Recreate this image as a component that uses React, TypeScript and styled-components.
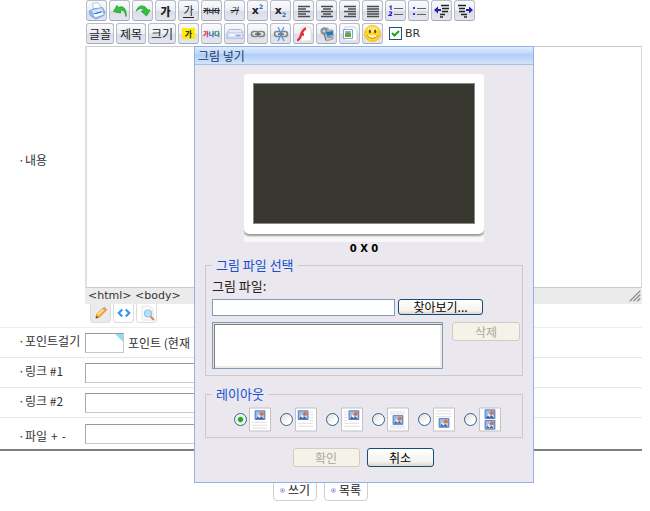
import React, { useState } from "react";
import styled, { createGlobalStyle, css } from "styled-components";

const Global = createGlobalStyle`
  * { box-sizing: border-box; }
  body {
    margin: 0;
    background: #fff;
    color: #333;
    font: 12px/16px "Noto Sans CJK KR", "Noto Sans", sans-serif;
  }
  button, input, select { font: inherit; margin: 0; }
  svg { display: block; }
`;

const Page = styled.main`
  position: relative;
  padding-right: 8px;
`;

const Row = styled.div<{ $height: number; $line?: string; $lineWidth?: number }>`
  display: grid;
  grid-template-columns: 85px minmax(0, 1fr);
  align-items: center;
  min-height: ${(p) => p.$height}px;
  border-bottom: ${(p) => p.$lineWidth ?? 1}px solid ${(p) => p.$line ?? "#e6e6e6"};
`;

const RowLabel = styled.label<{ $place?: "high" | "low" }>`
  display: flex;
  gap: 4px;
  padding: ${(p) => (p.$place === "low" ? "4px 0 0 18px" : p.$place === "high" ? "0 0 8px 18px" : "0 0 4px 18px")};
  white-space: nowrap;
`;

const Bullet = styled.span`
  width: 3px;
`;

const PlainButton = styled.button`
  padding: 0;
  border: 0;
  background: none;
  color: inherit;
`;

const Editor = styled.section`
  align-self: start;
`;

const Toolbars = styled.div`
  display: flex;
  flex-direction: column;
  gap: 2px;
  margin-bottom: 2px;
`;

const Toolbar = styled.div`
  display: flex;
  gap: 2px;
  padding-left: 1px;
`;

const ToolButton = styled.button<{ $width?: number }>`
  display: flex;
  align-items: center;
  justify-content: center;
  flex: none;
  width: ${(p) => p.$width ?? 21}px;
  height: 21px;
  padding: 0;
  border: 1px solid #b9bcc9;
  border-bottom-color: #a5a8b5;
  border-radius: 3px;
  background: linear-gradient(#fafbfd, #eceef5 50%, #d9dce8 51%, #e4e7f0);
  color: #222;
  white-space: nowrap;
`;

const BreakToggle = styled.label`
  display: flex;
  align-items: center;
  gap: 3px;
  padding-left: 4px;
  font: 11px/14px "DejaVu Sans", sans-serif;
`;

const CheckBox = styled.input`
  appearance: none;
  width: 13px;
  height: 13px;
  border: 1px solid #1d5281;
  background: #fff;
  &:checked {
    background: #fff url("data:image/svg+xml,%3Csvg xmlns='http://www.w3.org/2000/svg' viewBox='0 0 11 11'%3E%3Cpath d='M2 5l2.5 2.5L9 3' fill='none' stroke='%2321a121' stroke-width='2'/%3E%3C/svg%3E");
  }
`;

const Canvas = styled.div`
  height: 242px;
  border: 1px solid #ccc;
  border-left: 2px solid #e0e0e0;
  border-right-color: #d8d8d8;
  background: #fff;
`;

const StatusBar = styled.div`
  display: flex;
  align-items: center;
  justify-content: space-between;
  height: 16px;
  padding: 0 1px 0 3px;
  background: #ebebeb;
  font: 11px/16px "DejaVu Sans", sans-serif;
`;

const ModeTabs = styled.div`
  display: flex;
  gap: 2px;
  padding-left: 5px;
  margin-bottom: 3px;
`;

const ModeTab = styled.button<{ $active?: boolean }>`
  display: grid;
  place-items: center;
  width: 21px;
  height: 19px;
  padding: 0;
  border: 1px solid #ddd;
  border-top: 0;
  border-radius: 0 0 4px 4px;
  background: ${(p) => (p.$active ? "#ebebeb" : "#fff")};
`;

const Field = styled.div`
  display: flex;
  align-items: center;
  gap: 4px;
  white-space: nowrap;
`;

const FormInput = styled.input<{ $small?: boolean }>`
  width: ${(p) => (p.$small ? "39px" : "60%")};
  height: 20px;
  padding: 0 3px;
  border: 1px solid #c8c8c8;
  border-top-color: #999;
  border-left-color: #aaa;
  background: ${(p) => (p.$small ? "linear-gradient(225deg, #8fdcf8 5px, #fff 6px)" : "#fff")};
`;

const PageActions = styled.div`
  display: flex;
  gap: 7px;
  padding: 28px 0 10px 273px;
`;

const PageButton = styled.button`
  display: flex;
  align-items: center;
  gap: 3px;
  width: 44px;
  height: 22px;
  padding: 0 6px;
  border: 1px solid #d0d0d0;
  border-radius: 4px;
  background: #fff;
  color: #222;
  white-space: nowrap;
`;

const Dialog = styled.section`
  position: absolute;
  top: 46px;
  left: 194px;
  width: 340px;
  border: 1px solid #91b2e5;
  background: #eae8ee;
  color: #222;
`;

const TitleBar = styled.h1`
  height: 18px;
  margin: 0;
  padding-left: 3px;
  border-bottom: 1px solid #a6c2e8;
  background: linear-gradient(#e0edfc, #c4dafa 35%, #afcef6 45%, #d2e4fb);
  color: #203a66;
  font-size: 12px;
  font-weight: 400;
  line-height: 17px;
`;

const Preview = styled.div`
  width: 240px;
  height: 160px;
  margin: 9px auto 0;
  padding: 9px 9px 10px;
  border-radius: 3px 3px 5px 5px;
  background: #fff;
  box-shadow: 0 2px 2px #999;
  clip-path: inset(0 0 -4px 0);
`;

const PreviewImage = styled.div`
  height: 141px;
  border: 1px solid #8a8c84;
  background: #373730;
`;

const PreviewFoot = styled.div`
  width: 240px;
  height: 7px;
  margin: 1px auto 0;
  background: #f7f7f8;
`;

const Dimensions = styled.output`
  display: block;
  color: #000;
  font: bold 10px/14px "DejaVu Sans", sans-serif;
  text-align: center;
`;

const Group = styled.fieldset`
  min-width: 0;
  margin: 0 10px;
  padding: 0 0 0 6px;
  border: 1px solid #cbc9d0;
`;

const FileGroup = styled(Group)`
  height: 120px;
  margin-bottom: 9px;
`;

const LayoutGroup = styled(Group)`
  height: 53px;
`;

const Legend = styled.legend`
  padding: 0 4px;
  color: #174fd0;
  font-size: 13px;
  line-height: 18px;
`;

const FileLabel = styled.label`
  display: block;
  margin: 3px 0 4px;
  font-size: 13px;
  line-height: 18px;
`;

const FileRow = styled.div`
  display: flex;
  align-items: start;
  gap: 3px;
  margin-bottom: 6px;
`;

const ListRow = styled(FileRow)`
  gap: 9px;
`;

const FileInput = styled.input`
  width: 183px;
  height: 17px;
  padding: 0 3px;
  border: 1px solid #7f9db9;
  background: #fff;
`;

const FileList = styled.select`
  width: 231px;
  height: 47px;
  padding: 0;
  border: 1px solid #7f9db9;
  border-radius: 0;
  background: #fff;
  box-shadow: inset 1px 1px #e6e4da, inset 2px 2px #817f76, inset -2px -2px #efede3;
  overflow: hidden;
`;

const XpButton = styled.button<{ $width: number; $short?: boolean }>`
  display: grid;
  place-items: center;
  width: ${(p) => p.$width}px;
  height: ${(p) => (p.$short ? 16 : 19)}px;
  padding: 0;
  border: 1px solid #164c79;
  border-radius: 3px;
  background: linear-gradient(#fff, #f4f3ee 75%, #d9d5c9);
  color: #000;
  line-height: 14px;
  &:disabled {
    border-color: #cfcdbd;
    background: #f3f3ea;
    color: #aaa99a;
  }
`;

const LayoutOptions = styled.div`
  display: flex;
  gap: 9px;
  padding: 4px 0 0 22px;
`;

const LayoutOption = styled.label`
  display: flex;
  align-items: center;
  gap: 2px;
  width: 37px;
`;

const Radio = styled.input`
  appearance: none;
  flex: none;
  width: 13px;
  height: 13px;
  border: 1px solid #31628f;
  border-radius: 50%;
  background: linear-gradient(135deg, #dcdcd4, #fff 70%);
  &:checked {
    background: radial-gradient(circle, #27a527 0 2px, #c8ecc5 3px, #f5f6f1 4px);
  }
`;

const DialogActions = styled.div`
  display: flex;
  justify-content: center;
  gap: 7px;
  padding: 10px 2px 15px 0;
`;

const Icon = ({ children, size = 16 }: { children: React.ReactNode; size?: number }) => (
  <svg width={size} height={size} viewBox="0 0 16 16" fill="none" aria-hidden="true">
    {children}
  </svg>
);

const PrintIcon = () => (
  <Icon size={18}>
    <path d="M4 1l5-.5 3 5-7 2z" fill="#fff" stroke="#a9c1e6" strokeWidth=".8" />
    <path d="M1 8l4-2 8-1 2 4-1 3-7 3-5-3z" fill="#8fbcf2" stroke="#7c9fd6" strokeWidth=".8" />
    <path d="M3 7.500l9-2 1.500 2.500-8 2z" fill="#d6e8fd" />
    <path d="M4 11l9-2.500 1.500 2.500-8 3z" fill="#fff" stroke="#83a8db" strokeWidth=".6" />
    <path d="M6 10.500l6-1.700" stroke="#2f74d8" />
  </Icon>
);

const CurveArrow = ({ redo = false }: { redo?: boolean }) => (
  <Icon>
    <path
      d={
        redo
          ? "M1.500 8C2 3 9 0 12.500 7H15l-3.500 6L6 8h3C8 5 5 4.500 1.500 8z"
          : "M14 13.500C15 5 10 2.500 7 4.500L5 2.500 1.500 8.500 8.500 10V7.500c3-1 5 2 5.500 6z"
      }
      fill="#35c335"
      stroke="#1c9a2e"
      strokeWidth=".8"
    />
  </Icon>
);

const AlignIcon = ({ kind }: { kind: "left" | "center" | "right" | "full" }) => {
  const start = kind === "right" ? 6 : kind === "center" ? 4 : 2;
  const end = kind === "left" ? 10 : kind === "center" ? 12 : 14;
  return (
    <Icon>
      <path d="M2 3.500h12M2 8.500h12M2 13.500h12" stroke="#4a4b50" strokeWidth="1.5" />
      <path
        d={kind === "full" ? "M2 6h12M2 11h12" : `M${start} 6h${end - start}M${start} 11h${end - start}`}
        stroke="#4a4b50"
        strokeWidth="1.5"
      />
    </Icon>
  );
};

const ListIcon = ({ ordered = false }: { ordered?: boolean }) => (
  <Icon>
    <path d="M6 5.500h9M6 11.500h9" stroke="#666" />
    {ordered ? (
      <path d="M1.500 4l1.500-1v4M1 9h2.500v1.500L1 12.500h3" stroke="#2926bc" strokeWidth="1.2" />
    ) : (
      <path d="M2 4h2v2H2zM2 10h2v2H2z" fill="#3938c5" />
    )}
  </Icon>
);

const IndentIcon = ({ outdent = false }: { outdent?: boolean }) => (
  <Icon>
    {outdent ? (
      <>
        <path d="M7 2.500h8M8 5.500h7M8 8.500h6M6 11.500h5M6 14h3" stroke="#222" strokeWidth="1.7" />
        <path d="M0 7l4-3.500V6h3v2H4v2.500z" fill="#211db3" />
      </>
    ) : (
      <>
        <path d="M1 2.500h8M2 5.500h6M2 8.500h6M4 11.500h6M7 14h3" stroke="#222" strokeWidth="1.7" />
        <path d="M16 7l-4-3.500V6H9v2h3v2.500z" fill="#211db3" />
      </>
    )}
  </Icon>
);

const SubtitleIcon = () => (
  <Icon size={18}>
    <path d="M3 4h10l2 2v6H1V7z" fill="#e6ebfa" stroke="#a3b1d8" strokeWidth=".8" />
    <path d="M1 7h12l2-1" stroke="#b9c5e4" strokeWidth=".8" />
    <path d="M2 8h11v4H2z" fill="#cfd9f1" />
    <path d="M9 9.500h4" stroke="#8499cf" />
    <path d="M3 9h5" stroke="#fff" strokeWidth="1.5" />
  </Icon>
);

const LinkIcon = ({ broken = false }: { broken?: boolean }) => (
  <Icon>
    <rect x="1.500" y="5.500" width="7" height="5" rx="2.500" stroke="#85857f" strokeWidth="1.6" />
    <rect x="7.500" y="5.500" width="7" height="5" rx="2.500" stroke="#85857f" strokeWidth="1.6" />
    <path d="M5 8h6" stroke="#55554f" strokeWidth="1.3" />
    {broken && <path d="M5 1l2 4M11 1L9 5M5 15l2-4M11 15l-2-4M8 5v6" stroke="#4d9bf0" strokeWidth="1.3" />}
  </Icon>
);

const FlashIcon = () => (
  <Icon>
    <path d="M5 1h8l2 3v11H5z" fill="#fff" stroke="#dcdfe6" />
    <path d="M1 14c5 0 3-10 9-11.500M4 8.500h4" stroke="#e8303c" strokeWidth="2.4" />
  </Icon>
);

const MovieIcon = () => (
  <Icon>
    <path d="M4 2h5v2h5v9l-7 2z" fill="#c5cbd2" stroke="#8a929c" strokeWidth=".8" />
    <circle cx="5" cy="5" r="3.500" fill="#858e98" />
    <circle cx="5" cy="5" r="1.500" fill="#c9d0d6" />
    <path d="M7 6l7-1v4l-6 1z" fill="#287bb2" />
    <path d="M5 8l2 6m1-3h5" stroke="#5e6a78" />
  </Icon>
);

const ImageFileIcon = () => (
  <Icon>
    <path d="M3 1h9l3 3v11H3z" fill="#fff" stroke="#cdd4dd" />
    <path d="M1.500 3.500h9v9h-9z" fill="#fff" stroke="#87a4cb" />
    <path d="M3 5h6v6H3z" fill="#8fb0cf" />
    <path d="M3 11V8l3-2 3 2v3z" fill="#69a53f" />
  </Icon>
);

const SmileIcon = () => (
  <Icon size={17}>
    <circle cx="8" cy="8" r="7.500" fill="#ffd625" stroke="#eebb12" strokeWidth=".8" />
    <ellipse cx="8" cy="4" rx="5" ry="2.500" fill="#ffe978" />
    <ellipse cx="5.500" cy="6" rx="1" ry="1.800" fill="#6b4a0c" />
    <ellipse cx="10.500" cy="6" rx="1" ry="1.800" fill="#6b4a0c" />
    <path d="M3 9.500c2 4 8 4 10 0" fill="#fff3ae" stroke="#b57d0c" strokeWidth=".8" />
  </Icon>
);

const PencilIcon = () => (
  <Icon size={14}>
    <path d="M2 14l1-5 8-7 3 3-8 8z" fill="#f6ac32" stroke="#d98f34" strokeWidth=".8" />
    <path d="M4 10l7-6" stroke="#ffe197" strokeWidth="2" />
    <path d="M10 3l2-2 3 3-2 2z" fill="#e99474" />
    <path d="M2 14l1-3 2 2z" fill="#574437" />
  </Icon>
);

const CodeIcon = () => (
  <Icon size={14}>
    <path d="M6 4L2 8l4 4M10 4l4 4-4 4" stroke="#3298f3" strokeWidth="2.4" />
  </Icon>
);

const SearchPageIcon = () => (
  <Icon>
    <path d="M3 1h7l4 3v11H3z" fill="#fafafa" stroke="#e4e4e4" />
    <circle cx="9" cy="8.500" r="3.500" fill="#b9e0fa" stroke="#8cc3ec" strokeWidth="1.2" />
    <path d="M11.500 11.500l3.500 3.500" stroke="#cd8d52" strokeWidth="2" />
  </Icon>
);

const GripIcon = () => (
  <Icon size={12}>
    <path d="M1 15L15 1M6 15l9-9M11 15l4-4" stroke="#888" strokeWidth="1.5" />
  </Icon>
);

const TargetIcon = () => (
  <svg width="7" height="7" viewBox="0 0 7 7" fill="none" aria-hidden="true">
    <circle cx="3.500" cy="3.500" r="3" stroke="#9e91e9" />
    <circle cx="3.500" cy="3.500" r="1.300" fill="#6e5bdc" />
  </svg>
);

const Picture = ({ x, y }: { x: number; y: number }) => (
  <g transform={`translate(${x} ${y})`}>
    <path d="M0 0h11v10H0z" fill="#9dbce8" />
    <path d="M.5 .5h10v9H.5z" stroke="#5d7fb8" />
    <path d="M1 9l3-5 2 3 2-2 2 4z" fill="#f2f5fb" />
    <path d="M1 9l2-3 2 2 2-2 3 3z" fill="#48659d" />
    <path d="M5 4l2-2.500 2.500 1L9 5 7 5.500z" fill="#e56a2c" />
  </g>
);

const layouts = [
  { name: "가운데", pictures: [[6, 3]], lines: "M3 15.500h16M3 18.500h16M3 21.500h16" },
  { name: "왼쪽", pictures: [[3, 3]], lines: "M15 4.500h4M15 7.500h4M15 10.500h4M15 13.500h4M3 16.500h16M3 19.500h16" },
  { name: "오른쪽", pictures: [[8, 3]], lines: "M3 4.500h4M3 7.500h4M3 10.500h4M3 13.500h4M3 16.500h16M3 19.500h16" },
  { name: "중간", pictures: [[6, 8]], lines: "M3 4.500h16M3 6.500h16M3 19.500h16M3 21.500h16" },
  { name: "아래", pictures: [[6, 11]], lines: "M3 3.500h16M3 6.500h16M3 9.500h16" },
  { name: "연속", pictures: [[6, 2], [6, 13]], lines: "" },
];

const LayoutIcon = ({ pictures, lines }: { pictures: number[][]; lines: string }) => (
  <svg width="23" height="25" viewBox="0 0 23 25" fill="none" aria-hidden="true">
    <path d="M.5.5h22v24H.5z" fill="#fff" stroke="#bebebe" />
    <path d={lines} stroke="#dedede" />
    {pictures.map(([x, y]) => (
      <Picture key={y} x={x} y={y} />
    ))}
  </svg>
);

const Glyph = styled.span<{ $style?: "bold" | "underline" | "strike" | "italic" | "highlight" | "colors" | "script" }>`
  font-size: 11px;
  line-height: 14px;
  ${(p) => p.$style === "bold" && css`font-weight: 900;`}
  ${(p) => p.$style === "underline" && css`border-bottom: 1px solid #222; line-height: 13px;`}
  ${(p) => p.$style === "strike" && css`font-size: 6px; font-weight: 900; text-decoration: line-through;`}
  ${(p) => p.$style === "italic" && css`font-size: 9px; font-style: italic; text-decoration: line-through;`}
  ${(p) => p.$style === "highlight" && css`padding: 0 3px; background: #ffed00; font-size: 8px; font-weight: 700; line-height: 11px;`}
  ${(p) => p.$style === "colors" && css`font-size: 6px; font-weight: 900;`}
  ${(p) => p.$style === "script" && css`font: bold 11px/14px "DejaVu Sans", sans-serif;`}
`;

const Tint = styled.span<{ $color: string }>`
  color: ${(p) => p.$color};
`;

const Script = styled.small<{ $sub?: boolean }>`
  color: #1768b7;
  font-size: 6px;
  line-height: 1px;
  vertical-align: ${(p) => (p.$sub ? "sub" : "super")};
`;

const firstTools: [string, React.ReactNode][] = [
  ["인쇄", <PrintIcon />],
  ["실행 취소", <CurveArrow />],
  ["다시 실행", <CurveArrow redo />],
  ["굵게", <Glyph $style="bold">가</Glyph>],
  ["밑줄", <Glyph $style="underline">가</Glyph>],
  ["취소선", <Glyph $style="strike">가나다</Glyph>],
  ["기울임", <Glyph $style="italic">가</Glyph>],
  ["위 첨자", <Glyph $style="script">x<Script>2</Script></Glyph>],
  ["아래 첨자", <Glyph $style="script">x<Script $sub>2</Script></Glyph>],
  ["왼쪽 정렬", <AlignIcon kind="left" />],
  ["가운데 정렬", <AlignIcon kind="center" />],
  ["오른쪽 정렬", <AlignIcon kind="right" />],
  ["양쪽 정렬", <AlignIcon kind="full" />],
  ["번호 목록", <ListIcon ordered />],
  ["목록", <ListIcon />],
  ["내어쓰기", <IndentIcon outdent />],
  ["들여쓰기", <IndentIcon />],
];

const secondTools: [string, React.ReactNode][] = [
  ["배경색", <Glyph $style="highlight">가</Glyph>],
  ["글자색", <Glyph $style="colors"><Tint $color="#d31e35">가</Tint><Tint $color="#1e5eac">나</Tint><Tint $color="#15845a">다</Tint></Glyph>],
  ["구분선", <SubtitleIcon />],
  ["링크", <LinkIcon />],
  ["링크 해제", <LinkIcon broken />],
  ["플래시", <FlashIcon />],
  ["동영상", <MovieIcon />],
  ["그림", <ImageFileIcon />],
  ["이모티콘", <SmileIcon />],
];

function ImageDialog() {
  const [layout, setLayout] = useState(0);
  return (
    <Dialog role="dialog" aria-labelledby="dialog-title">
      <TitleBar id="dialog-title">그림 넣기</TitleBar>
      <Preview><PreviewImage /></Preview>
      <PreviewFoot />
      <Dimensions>0 X 0</Dimensions>
      <FileGroup>
        <Legend>그림 파일 선택</Legend>
        <FileLabel htmlFor="picture-file">그림 파일:</FileLabel>
        <FileRow>
          <FileInput id="picture-file" />
          <XpButton type="button" $width={85} $short>찾아보기...</XpButton>
        </FileRow>
        <ListRow>
          <FileList size={3} aria-label="그림 파일 목록" />
          <XpButton type="button" $width={68} disabled>삭제</XpButton>
        </ListRow>
      </FileGroup>
      <LayoutGroup>
        <Legend>레이아웃</Legend>
        <LayoutOptions>
          {layouts.map((item, index) => (
            <LayoutOption key={item.name}>
              <Radio
                type="radio"
                name="layout"
                aria-label={item.name}
                checked={layout === index}
                onChange={() => setLayout(index)}
              />
              <LayoutIcon pictures={item.pictures} lines={item.lines} />
            </LayoutOption>
          ))}
        </LayoutOptions>
      </LayoutGroup>
      <DialogActions>
        <XpButton type="button" $width={67} disabled>확인</XpButton>
        <XpButton type="button" $width={67}>취소</XpButton>
      </DialogActions>
    </Dialog>
  );
}

export default function App() {
  return (
    <>
      <Global />
      <Page>
        <Row $height={328} $line="#eee">
          <RowLabel as="div" $place="high"><Bullet>·</Bullet>내용</RowLabel>
          <Editor>
            <Toolbars>
              <Toolbar>
                {firstTools.map(([name, icon]) => (
                  <ToolButton key={name} type="button" aria-label={name}>{icon}</ToolButton>
                ))}
              </Toolbar>
              <Toolbar>
                <ToolButton type="button" $width={28}>글꼴</ToolButton>
                <ToolButton type="button" $width={30}>제목</ToolButton>
                <ToolButton type="button" $width={28}>크기</ToolButton>
                {secondTools.map(([name, icon]) => (
                  <ToolButton key={name} type="button" aria-label={name}>{icon}</ToolButton>
                ))}
                <BreakToggle><CheckBox type="checkbox" defaultChecked />BR</BreakToggle>
              </Toolbar>
            </Toolbars>
            <Canvas contentEditable suppressContentEditableWarning role="textbox" aria-label="내용" />
            <StatusBar><span>&lt;html&gt; &lt;body&gt;</span><GripIcon /></StatusBar>
            <ModeTabs>
              <ModeTab type="button" aria-label="편집" $active><PencilIcon /></ModeTab>
              <ModeTab type="button" aria-label="소스"><CodeIcon /></ModeTab>
              <ModeTab type="button" aria-label="미리보기"><SearchPageIcon /></ModeTab>
            </ModeTabs>
          </Editor>
        </Row>
        <Row $height={30}>
          <RowLabel htmlFor="point"><Bullet>·</Bullet>포인트걸기</RowLabel>
          <Field><FormInput id="point" $small />포인트 (현재</Field>
        </Row>
        <Row $height={30}>
          <RowLabel htmlFor="link1"><Bullet>·</Bullet>링크 #1</RowLabel>
          <FormInput id="link1" />
        </Row>
        <Row $height={30}>
          <RowLabel htmlFor="link2"><Bullet>·</Bullet>링크 #2</RowLabel>
          <FormInput id="link2" />
        </Row>
        <Row $height={33} $line="#808080" $lineWidth={2}>
          <RowLabel htmlFor="file" $place="low">
            <Bullet>·</Bullet>파일
            <PlainButton type="button" aria-label="파일 추가">+</PlainButton>
            <PlainButton type="button" aria-label="파일 삭제">-</PlainButton>
          </RowLabel>
          <FormInput id="file" />
        </Row>
        <PageActions>
          <PageButton type="button"><TargetIcon />쓰기</PageButton>
          <PageButton type="button"><TargetIcon />목록</PageButton>
        </PageActions>
        <ImageDialog />
      </Page>
    </>
  );
}
